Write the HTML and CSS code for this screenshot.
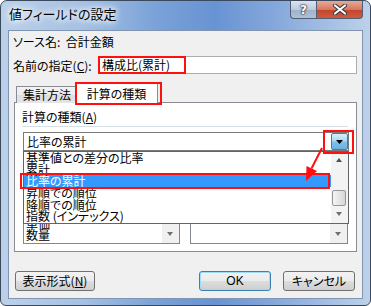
FILE: index.html
```html
<!DOCTYPE html>
<html lang="ja">
<head>
    <meta charset="UTF-8">
    <title>値フィールドの設定</title>
    <link rel="stylesheet" href="styles.css">
</head>
<body>
    <div class="window">
        <div class="titlebar">
            <span class="title">値フィールドの設定</span>
            <div class="caption-buttons">
                <div class="cap-btn help">?</div>
                <div class="cap-btn close">
                    <svg width="14" height="11" viewBox="0 0 14 11">
                        <path d="M2 1.5 L12 9.5 M12 1.5 L2 9.5" stroke="#2e3440" stroke-width="4" stroke-linecap="round"/>
                        <path d="M2 1.5 L12 9.5 M12 1.5 L2 9.5" stroke="#fff" stroke-width="2.2" stroke-linecap="round"/>
                    </svg>
                </div>
            </div>
        </div>

        <div class="client">
            <div class="source">ソース名:&nbsp;&nbsp;合計金額</div>
            <div class="name-row">
                <label>名前の指定(<u>C</u>):</label>
                <div class="textbox">構成比(累計)</div>
            </div>

            <div class="tabs">
                <div class="tab">集計方法</div>
                <div class="tab active">計算の種類</div>
            </div>

            <div class="panel">
                <div class="group-label">計算の種類(<u>A</u>)</div>
                <div class="separator"></div>
                <div class="combo">
                    <span>比率の累計</span>
                    <div class="drop-btn">
                        <svg width="7" height="4" viewBox="0 0 7 4"><path d="M0 0 H7 L3.5 4 Z" fill="#000"/></svg>
                    </div>
                </div>
                <div class="lists">
                    <div class="listbox">
                        <div class="list-items">
                            <div>単価</div>
                            <div>数量</div>
                        </div>
                        <div class="scrollbar">
                            <div class="arrow-down"></div>
                        </div>
                    </div>
                    <div class="listbox wide">
                        <div class="list-items"></div>
                        <div class="scrollbar">
                            <div class="arrow-down"></div>
                        </div>
                    </div>
                </div>
            </div>

            <div class="footer">
                <div class="btn btn-format">表示形式(<u>N</u>)</div>
                <div class="btn btn-ok">OK</div>
                <div class="btn btn-cancel">キャンセル</div>
            </div>
        </div>

        <!-- opened dropdown list -->
        <div class="dropdown">
            <div class="drop-items">
                <div class="item">基準値との差分の比率</div>
                <div class="item">累計</div>
                <div class="item selected">比率の累計</div>
                <div class="item">昇順での順位</div>
                <div class="item">降順での順位</div>
                <div class="item">指数 (インデックス)</div>
            </div>
            <div class="drop-scroll">
                <div class="arrow-up"></div>
                <div class="thumb"></div>
                <div class="arrow-down"></div>
            </div>
        </div>

        <!-- red annotations -->
        <div class="mark mark-name"></div>
        <div class="mark mark-tab"></div>
        <div class="mark mark-btn"></div>
        <div class="mark mark-item"></div>
        <svg class="pointer" width="371" height="306" viewBox="0 0 371 306">
            <path d="M322 148 L311.5 168.5" stroke="#ff1010" stroke-width="2"/>
            <path d="M306 181 L306.5 166 L317 171 Z" fill="#ff1010"/>
        </svg>
    </div>
</body>
</html>
```

FILE: styles.css
```css
* {
    margin: 0;
    padding: 0;
    box-sizing: border-box;
}

body {
    background: #fff;
    font-family: "Noto Sans CJK JP", "Noto Sans", sans-serif;
    font-size: 12px;
    font-feature-settings: "palt";
    color: #000;
}

u {
    text-decoration: underline;
}

.window {
    position: relative;
    width: 371px;
    height: 306px;
    border: 1px solid #3a4a5c;
    border-radius: 7px 7px 6px 6px;
    background: linear-gradient(90deg, #bcd0e9 0%, #a6c1e3 22%, #7aa2d8 42%, #6893d3 58%, #86a9dc 75%, #bdd1ea 100%);
    overflow: hidden;
}

.titlebar {
    display: flex;
    align-items: flex-start;
    height: 29px;
}

.title {
    padding: 4px 0 0 8px;
    font-size: 13px;
    line-height: 18px;
    text-shadow: 0 0 5px #fff, 0 0 8px #fff, 0 0 10px rgba(255, 255, 255, 0.8);
}

.caption-buttons {
    display: flex;
    margin-left: auto;
    margin-right: 7px;
}

.cap-btn {
    display: flex;
    justify-content: center;
    align-items: center;
    height: 18px;
    border: 1px solid #4e5f75;
    border-top: none;
}

.help {
    width: 26px;
    border-right: none;
    border-radius: 0 0 0 4px;
    background: linear-gradient(#dbe4ee, #bccbdc 50%, #9fb2ca 51%, #afc1d6);
    color: #fff;
    font-family: "DejaVu Sans", sans-serif;
    font-weight: bold;
    font-size: 12px;
    text-shadow: 0 0 1px #2e3440, 0 0 2px #2e3440, 0 0 2px #2e3440;
}

.close {
    width: 47px;
    border-radius: 0 0 4px 0;
    background: linear-gradient(#e9a897, #d6785f 50%, #c4432b 51%, #cf5a3f);
}

.client {
    margin: 0 7px;
    height: 269px;
    border: 1px solid #8195b0;
    background: #f0f0f0;
}

.source {
    padding: 3px 0 0 4px;
    line-height: 16px;
}

.name-row {
    display: flex;
    align-items: center;
    margin-top: 6px;
    height: 18px;
}

.name-row label {
    flex: 0 0 90px;
    padding-left: 4px;
}

.textbox {
    width: 258px;
    height: 18px;
    border: 1px solid #abadb3;
    background: #fff;
    padding-left: 2px;
    line-height: 16px;
}

.tabs {
    display: flex;
    align-items: flex-end;
    height: 21px;
    margin-top: 8px;
    padding-left: 7px;
    position: relative;
    z-index: 1;
}

.tab {
    width: 60px;
    height: 17px;
    border: 1px solid #898c95;
    border-bottom: none;
    background: linear-gradient(#f3f3f3, #ebebeb 50%, #dedede 51%, #e6e6e6);
    line-height: 15px;
    padding-left: 6px;
}

.tab.active {
    width: 83px;
    height: 22px;
    margin-left: -1px;
    margin-bottom: -1px;
    padding: 3px 0 0 0;
    background: #fff;
    text-align: center;
    line-height: 16px;
}

.panel {
    margin: -1px 0 0 5px;
    width: 343px;
    height: 150px;
    border: 1px solid #898c95;
    background: #fff;
}

.group-label {
    padding: 6px 0 0 7px;
    line-height: 16px;
}

.separator {
    margin: 1px 0 0 7px;
    width: 326px;
    height: 1px;
    background: #d5dfe5;
}

.combo {
    display: flex;
    align-items: center;
    margin: 5px 0 0 8px;
    width: 326px;
    height: 19px;
    border: 1px solid #7a7a7a;
    padding-left: 3px;
}

.drop-btn {
    display: flex;
    justify-content: center;
    align-items: center;
    margin-left: auto;
    width: 17px;
    height: 17px;
    border: 1px solid #3c7fb1;
    border-radius: 2px;
    background: linear-gradient(#d9effc, #a9d9f5 45%, #7cc0ec 55%, #6cb1e2);
}

.lists {
    display: flex;
    gap: 10px;
    margin: 9px 0 0 8px;
}

.listbox {
    display: flex;
    width: 157px;
    height: 84px;
    border: 1px solid #828790;
}

.listbox.wide {
    width: 158px;
}

.list-items {
    flex: 1;
    display: flex;
    flex-direction: column;
    justify-content: flex-end;
    padding: 0 0 2px 2px;
    line-height: 11.7px;
}

.scrollbar {
    display: flex;
    flex-direction: column;
    justify-content: flex-end;
    width: 17px;
    background: #f0f0f0;
}

.arrow-down,
.arrow-up {
    height: 17px;
    position: relative;
}

.arrow-down::after,
.arrow-up::after {
    content: "";
    position: absolute;
    left: 5px;
    top: 6px;
    border-left: 3.5px solid transparent;
    border-right: 3.5px solid transparent;
}

.arrow-down::after {
    border-top: 4px solid #707070;
}

.arrow-up::after {
    border-bottom: 4px solid #505050;
}

.footer {
    display: flex;
    margin-top: 19px;
    padding: 0 7px 0 6px;
}

.btn {
    height: 20px;
    border: 1px solid #707070;
    border-radius: 3px;
    background: linear-gradient(#f2f2f2, #ebebeb 50%, #dddddd 51%, #cfcfcf);
    line-height: 18px;
    text-align: center;
}

.btn-format {
    width: 80px;
}

.btn-ok {
    width: 72px;
    margin-left: auto;
    border-color: #3c7fb1;
    box-shadow: inset 0 0 0 1px #9fdcf7;
    font-family: "Liberation Sans", sans-serif;
}

.btn-cancel {
    width: 72px;
    margin-left: 12px;
}

/* opened dropdown */
.dropdown {
    position: absolute;
    left: 22px;
    top: 150px;
    display: flex;
    width: 326px;
    height: 73px;
    border: 1px solid #646464;
    background: #fff;
    z-index: 2;
}

.drop-items {
    flex: 1;
}

.item {
    height: 11.67px;
    line-height: 11.67px;
    padding-left: 2px;
    white-space: nowrap;
}

.item.selected {
    background: #3399ff;
    color: #fff;
}

.drop-scroll {
    display: flex;
    flex-direction: column;
    width: 17px;
    background: #f3f3f3;
}

.drop-scroll .thumb {
    margin: 21px 2px 0 1px;
    height: 16px;
    border: 1px solid #979797;
    border-radius: 2px;
    background: linear-gradient(90deg, #f4f4f4, #e6e6e6 50%, #d6d6d6);
}

.drop-scroll .arrow-down {
    margin-top: auto;
}

/* annotations */
.mark {
    position: absolute;
    border: 2px solid #ff1010;
    z-index: 3;
}

.mark-name {
    left: 97px;
    top: 55px;
    width: 88px;
    height: 18px;
}

.mark-tab {
    left: 74px;
    top: 81px;
    width: 87px;
    height: 23px;
}

.mark-btn {
    left: 322px;
    top: 129px;
    width: 31px;
    height: 24px;
}

.mark-item {
    left: 19px;
    top: 172px;
    width: 310px;
    height: 16px;
}

.pointer {
    position: absolute;
    left: -1px;
    top: -1px;
    z-index: 4;
}
```
